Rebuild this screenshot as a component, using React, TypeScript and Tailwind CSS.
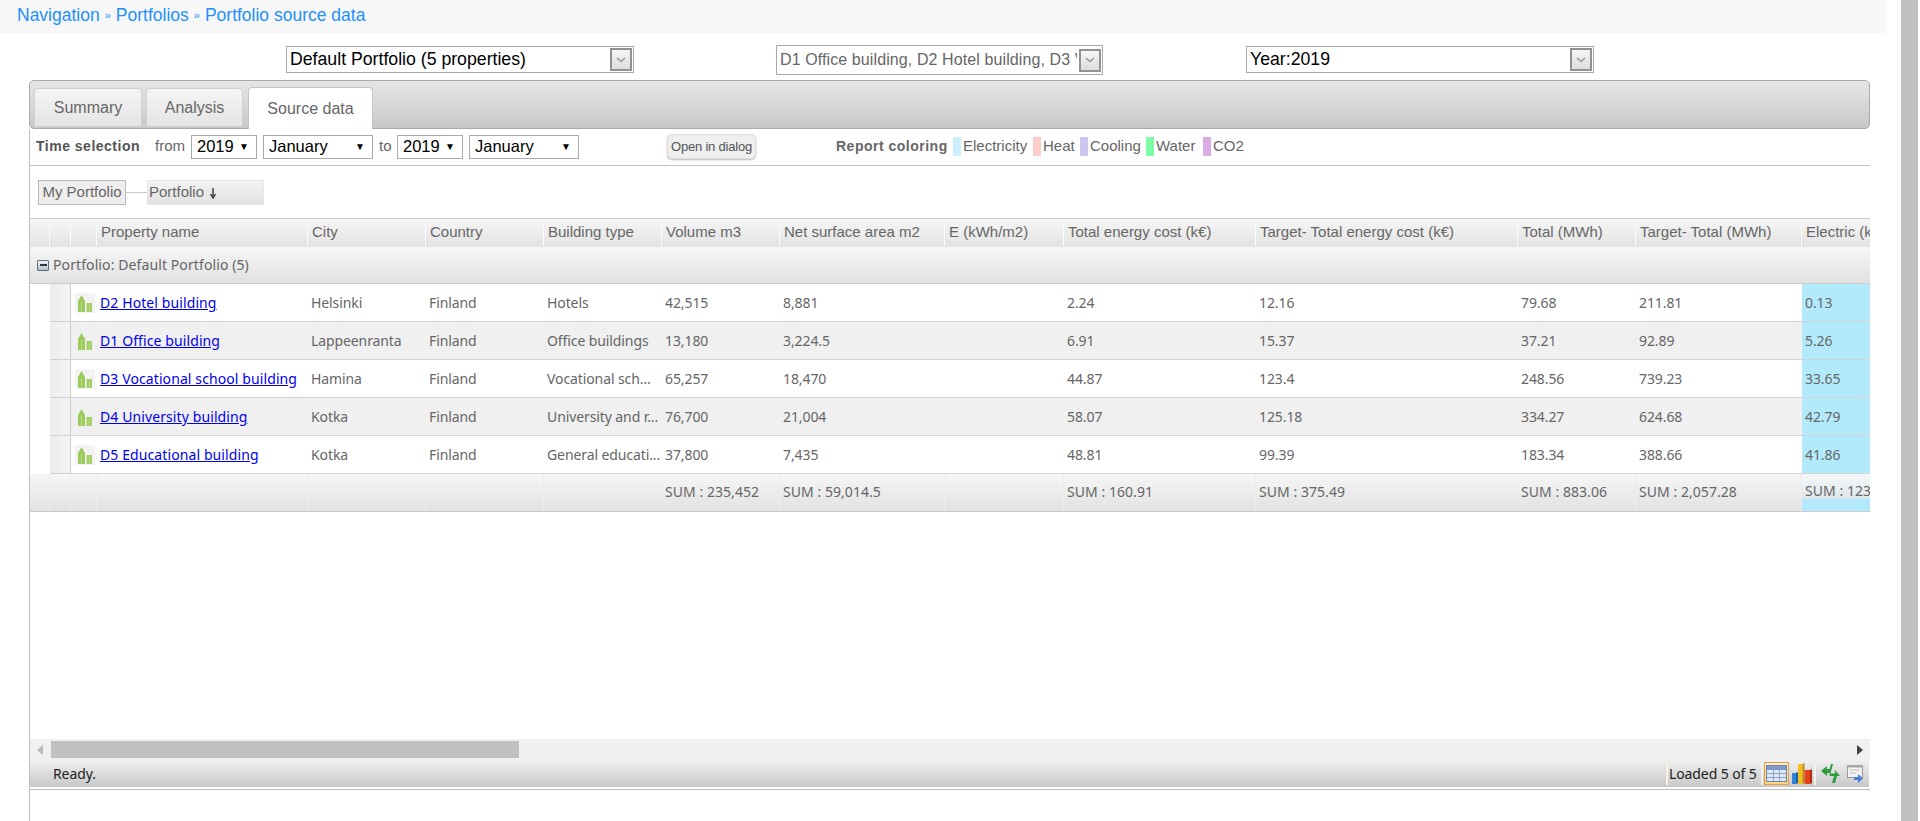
import React from "react";

const W = [
  "w-[20px]", "w-[21px]", "w-[26px]", "w-[211px]", "w-[118px]", "w-[118px]", "w-[118px]", "w-[118px]",
  "w-[165px]", "w-[119px]", "w-[192px]", "w-[262px]", "w-[118px]", "w-[166px]", "w-[120px]",
];

const HEAD = ["", "", "", "Property name", "City", "Country", "Building type", "Volume m3", "Net surface area m2", "E (kWh/m2)", "Total energy cost (k€)", "Target- Total energy cost (k€)", "Total (MWh)", "Target- Total (MWh)", "Electric (kWh)"];

const ROWS = [
  ["D2 Hotel building", "Helsinki", "Finland", "Hotels", "42,515", "8,881", "", "2.24", "12.16", "79.68", "211.81", "0.13"],
  ["D1 Office building", "Lappeenranta", "Finland", "Office buildings", "13,180", "3,224.5", "", "6.91", "15.37", "37.21", "92.89", "5.26"],
  ["D3 Vocational school building", "Hamina", "Finland", "Vocational sch...", "65,257", "18,470", "", "44.87", "123.4", "248.56", "739.23", "33.65"],
  ["D4 University building", "Kotka", "Finland", "University and r...", "76,700", "21,004", "", "58.07", "125.18", "334.27", "624.68", "42.79"],
  ["D5 Educational building", "Kotka", "Finland", "General educati...", "37,800", "7,435", "", "48.81", "99.39", "183.34", "388.66", "41.86"],
];

const SUM = ["", "", "", "", "", "", "", "SUM : 235,452", "SUM : 59,014.5", "", "SUM : 160.91", "SUM : 375.49", "SUM : 883.06", "SUM : 2,057.28", "SUM : 123.69"];

function Chevron() {
  return (
    <svg width="10" height="6" viewBox="0 0 10 6" fill="none">
      <path d="M1 1l4 3.5L9 1" stroke="#9a9a9a" strokeWidth="1.6" />
    </svg>
  );
}

function NativeSelect({ label, cls, gray }: { label: string; cls: string; gray?: boolean }) {
  return (
    <div className={`${cls} flex items-center justify-between border border-[#a9a9a9] bg-white pl-[3px] pr-[1px] whitespace-nowrap overflow-hidden`}>
      <span className={gray ? "text-[16px] tracking-[0.1px] text-[#666666] overflow-hidden" : "text-[17.7px] text-black overflow-hidden"}>{label}</span>
      <span className="ml-[2px] shrink-0 w-[22px] h-[23px] border-2 border-[#929292] bg-linear-to-b from-[#f6f6f6] to-[#dddddd] flex items-center justify-center">
        <Chevron />
      </span>
    </div>
  );
}

function MiniSelect({ label, cls }: { label: string; cls: string }) {
  return (
    <div className={`${cls} h-[24px] flex items-center justify-between border border-[#a9a9a9] bg-white pl-[5px] pr-[7px] text-[16.5px] text-black`}>
      <span>{label}</span>
      <span className="text-[10px] text-black">▼</span>
    </div>
  );
}

function Legend({ color, label, cls }: { color: string; label: string; cls: string }) {
  return (
    <>
      <span className={`${color} w-[8px] h-[19px] shrink-0`} />
      <span className={`${cls} pl-[2px] text-[15px] text-[#666666] whitespace-nowrap`}>{label}</span>
    </>
  );
}

function Building() {
  return (
    <svg width="16" height="18" viewBox="0 0 16 18">
      <path d="M1 18V7l3.5-6L8 7v11z" fill="#9ccb5c" />
      <path d="M9.5 18V9H15v9z" fill="#a4cf66" />
      <path d="M4 18V8h1v10zM12 18v-7h1v7z" fill="#bcdc8c" />
    </svg>
  );
}

function TableIcon() {
  return (
    <span className="w-[25px] h-[23px] border border-[#e0a050] bg-linear-to-b from-[#ffeec2] to-[#ffd27a] flex items-center justify-center shrink-0">
      <svg width="21" height="17" viewBox="0 0 21 17">
        <rect x="0.5" y="0.5" width="20" height="16" fill="#dfe7f5" stroke="#6d84ad" />
        <rect x="1" y="1" width="19" height="4" fill="#7e97c6" />
        <path d="M7.5 1v15M13.5 1v15M1 8.5h19M1 12.5h19" stroke="#8ea3c9" />
      </svg>
    </span>
  );
}

function ChartIcon() {
  return (
    <svg width="20" height="22" viewBox="0 0 20 22" className="ml-[3px] shrink-0">
      <path d="M0 10h4v11H0z" fill="#2f86d6" />
      <path d="M4 10l2-1v11l-2 1z" fill="#1c5fa5" />
      <path d="M6 1h4.500v20H6z" fill="#f2c01e" />
      <path d="M10.500 1l2-1v20l-2 1z" fill="#b98a0c" />
      <path d="M12.500 7H18v14h-5.500z" fill="#e8401c" />
      <path d="M18 7l2-1v14l-2 1z" fill="#a92a10" />
    </svg>
  );
}

function ArrowsIcon() {
  return (
    <svg width="19" height="19" viewBox="0 0 19 19" className="ml-[5px] shrink-0">
      <path d="M0 7l6-5v3h2.500L10 0h2L9.500 9H6v3z" fill="#2e9b3c" />
      <path d="M14 6l5 6h-3l-2 7h-3l2-7h-4l-1-2.500h6z" fill="#2e9b3c" />
    </svg>
  );
}

function SendIcon() {
  return (
    <svg width="17" height="18" viewBox="0 0 17 18" className="ml-[7px] shrink-0">
      <rect x="0.5" y="0.5" width="15" height="12" fill="#f1f1f1" stroke="#9a9a9a" />
      <rect x="0" y="0" width="16" height="2.5" fill="#a8a8a8" />
      <path d="M3 5h9M3 8h6" stroke="#c0c0c0" />
      <path d="M7 12h4V9l5 4.500L11 18v-3H7z" fill="#4a7fd6" />
    </svg>
  );
}

function Cell({ i, children, cls }: { i: number; children?: React.ReactNode; cls?: string }) {
  return <div className={`${W[i]} shrink-0 h-full flex items-center pl-[3px] whitespace-nowrap overflow-hidden ${cls ?? ""}`}>{children}</div>;
}

export default function App() {
  return (
    <div className="w-[1920px] h-[821px] overflow-hidden bg-white flex font-['Liberation_Sans',sans-serif]">
      <div className="w-[1901px] shrink-0 flex flex-col">
        {/* breadcrumb */}
        <div className="w-[1886px] h-[33px] shrink-0 bg-[#f7f7f7] pl-[17px] flex items-center text-[17.5px] text-[#1e90ff] pb-[3px] whitespace-nowrap">
          Navigation<span className="text-[11px] mx-[5px] text-[#1e90ff]">»</span>Portfolios<span className="text-[11px] mx-[5px]">»</span>Portfolio source data
        </div>

        {/* top selects */}
        <div className="h-[47px] shrink-0 flex items-start pt-[13px] pl-[286px]">
          <NativeSelect cls="w-[348px] h-[27px]" label="Default Portfolio (5 properties)" />
          <div className="ml-[142px] -mt-[1px]">
            <NativeSelect gray cls="w-[327px] h-[30px]" label="D1 Office building, D2 Hotel building, D3 Vocational school" />
          </div>
          <NativeSelect cls="ml-[143px] w-[348px] h-[27px]" label="Year:2019" />
        </div>

        {/* panel */}
        <div className="ml-[29px] w-[1841px] flex-1 flex flex-col min-h-0">
          <div className="h-[49px] shrink-0 border border-[#aaaaaa] rounded-[5px] bg-linear-to-b from-[#e6e6e6] to-[#c8c8c8] flex items-end pl-[4px] text-[16px] text-[#666666]">
            <div className="w-[108px] h-[39px] mb-[1px] pt-[1px] rounded-t-[4px] border border-[#d0d0d0] bg-linear-to-b from-[#f5f5f5] to-[#e4e4e4] flex items-center justify-center">Summary</div>
            <div className="ml-[4px] w-[97px] h-[39px] mb-[1px] pt-[1px] rounded-t-[4px] border border-[#d0d0d0] bg-linear-to-b from-[#f5f5f5] to-[#e4e4e4] flex items-center justify-center">Analysis</div>
            <div className="ml-[5px] w-[125px] h-[42px] -mb-[1px] pt-[1px] rounded-t-[4px] border border-b-0 border-[#c4c4c4] bg-white flex items-center justify-center">Source data</div>
          </div>

          <div className="flex-1 flex flex-col border-l border-[#c0c0c0] min-h-0">
            {/* time selection toolbar */}
            <div className="h-[37px] shrink-0 border-b border-[#c4c4c4] flex items-center text-[15px] text-[#666666] pb-[1px]">
              <span className="ml-[6px] w-[119px] text-[14px] font-bold tracking-[0.5px] text-[#555555] whitespace-nowrap">Time selection</span>
              <span className="w-[36px]">from</span>
              <MiniSelect cls="w-[66px]" label="2019" />
              <MiniSelect cls="ml-[6px] w-[110px]" label="January" />
              <span className="ml-[6px] w-[18px]">to</span>
              <MiniSelect cls="w-[66px]" label="2019" />
              <MiniSelect cls="ml-[6px] w-[110px]" label="January" />
              <div className="ml-[88px] w-[89px] h-[25px] rounded-[5px] bg-[#efefef] border border-[#dddddd] shadow-[0_1px_2px_#bbbbbb] flex items-center justify-center text-[13px] tracking-[-0.2px] text-[#555555] whitespace-nowrap">Open in dialog</div>
              <span className="ml-[80px] w-[117px] text-[14px] font-bold tracking-[0.5px] text-[#666666] whitespace-nowrap">Report coloring</span>
              <Legend color="bg-[#cceeff]" label="Electricity" cls="w-[72px]" />
              <Legend color="bg-[#ffcccc]" label="Heat" cls="w-[39px]" />
              <Legend color="bg-[#ccc6ee]" label="Cooling" cls="w-[58px]" />
              <Legend color="bg-[#7dfba6]" label="Water" cls="w-[49px]" />
              <Legend color="bg-[#d9ade3]" label="CO2" cls="w-[40px]" />
            </div>

            {/* grouping */}
            <div className="h-[52px] shrink-0 pt-[14px] pl-[8px] flex items-start">
              <div className="w-[88px] h-[25px] border border-[#bbbbbb] bg-[#eeeeee] flex items-center justify-center text-[15px] text-[#666666] whitespace-nowrap">My Portfolio</div>
              <div className="w-[21px] h-[1px] bg-[#cccccc] mt-[12px]" />
              <div className="w-[117px] h-[25px] border border-[#e6e6e6] bg-linear-to-b from-[#f3f3f3] to-[#e2e2e2] flex items-start pl-[1px] text-[15px] text-[#666666]">
                Portfolio
                <svg width="10" height="12" viewBox="0 0 10 12" className="ml-[4px] mt-[6px]">
                  <path d="M5 1v8M2.500 7L5 11l2.500-4" stroke="#333333" strokeWidth="1.4" fill="none" />
                </svg>
              </div>
            </div>

            {/* grid */}
            <div className="shrink-0 w-[1840px] overflow-hidden border-t border-[#cccccc] text-[#666666]">
              <div className="h-[27px] flex bg-linear-to-b from-[#f6f6f6] to-[#e3e3e3] text-[15px]">
                {HEAD.map((h, i) => (
                  <Cell key={i} i={i} cls="border-r border-[#fafafa] pl-[4px]">{h}</Cell>
                ))}
              </div>

              <div className="h-[38px] border-t border-[#e6e6e6] border-b border-b-[#cccccc] flex items-center bg-linear-to-b from-[#f6f6f6] to-[#e1e1e1] pl-[7px] pb-[2px] text-[14px] font-['Noto_Sans',sans-serif] tracking-[0.1px]">
                <span className="w-[12px] h-[11px] mt-[2px] rounded-[1px] border border-[#5d6d7d] bg-linear-to-b from-[#f0f4f8] to-[#b4c0cc] flex items-center justify-center shrink-0">
                  <span className="w-[7px] h-[2px] bg-[#333333]" />
                </span>
                <span className="ml-[4px]">Portfolio: Default Portfolio (5)</span>
              </div>

              {ROWS.map((r, ri) => (
                <div key={ri} className="h-[38px] flex font-['Noto_Sans',sans-serif] text-[14px] tracking-[-0.1px]">
                  <Cell i={0} />
                  <Cell i={1} cls="border-b border-[#d0d0d0] bg-linear-to-r from-[#ececec] to-[#f4f4f4] border-r border-r-[#cccccc]" />
                  <div className={`flex flex-1 border-b border-[#d4d4d4] ${ri % 2 ? "bg-[#f0f0f0]" : "bg-white"}`}>
                    <Cell i={2} cls="pl-[4px]">
                      <span className={`w-[20px] h-[20px] flex items-center justify-center ${ri % 2 ? "" : "bg-[#f3f3f3]"}`}>
                        <Building />
                      </span>
                    </Cell>
                    <Cell i={3}>
                      <a className="text-[#0000ee] underline tracking-[0.1px]">{r[0]}</a>
                    </Cell>
                    {r.slice(1, 11).map((v, ci) => (
                      <Cell key={ci} i={ci + 4}>{v}</Cell>
                    ))}
                    <Cell i={14} cls="bg-[#b3eafb]">{r[11]}</Cell>
                  </div>
                </div>
              ))}

              <div className="h-[38px] flex font-['Noto_Sans',sans-serif] text-[14px] tracking-[0.05px] border-b border-[#cccccc] bg-linear-to-b from-[#f6f6f6] to-[#e2e2e2]">
                {SUM.map((s, i) =>
                  i === 14 ? (
                    <div key={i} className={`${W[i]} shrink-0 h-full flex flex-col bg-[#b3eafb]`}>
                      <div className="h-[25px] pl-[3px] bg-linear-to-b from-[#f4f8f9] to-[#dfe6e8] flex items-center whitespace-nowrap pt-[8px]">{s}</div>
                    </div>
                  ) : (
                    <Cell key={i} i={i} cls="border-r border-[#ededed] pb-[3px]">{s}</Cell>
                  )
                )}
              </div>
            </div>

            <div className="flex-1 min-h-0" />

            {/* horizontal scrollbar */}
            <div className="h-[21px] shrink-0 bg-[#f0f0f0] flex items-center justify-between pl-[7px] pr-[7px]">
              <div className="flex items-center">
                <span className="w-0 h-0 border-y-[5px] border-y-transparent border-r-[6px] border-r-[#bbbbbb]" />
                <span className="ml-[8px] w-[468px] h-[17px] bg-[#c0c0c0]" />
              </div>
              <span className="w-0 h-0 border-y-[5px] border-y-transparent border-l-[6px] border-l-[#444444]" />
            </div>

            {/* status bar */}
            <div className="h-[27px] shrink-0 w-[1839px] bg-linear-to-b from-[#f0f0f0] via-[#dcdcdc] to-[#c8c8c8] flex items-center pl-[23px] font-['Noto_Sans',sans-serif] text-[14px] text-[#222222] tracking-[-0.1px]">
              <span>Ready.</span>
              <div className="ml-auto flex items-center h-full pr-[5px]">
                <span className="w-[2px] h-[22px] bg-[#f4f1e6]" />
                <span className="ml-[1px] w-[92px] whitespace-nowrap">Loaded 5 of 5</span>
                <span className="w-[2px] h-[22px] bg-[#f4f1e6]" />
                <span className="ml-[1px]"><TableIcon /></span>
                <ChartIcon />
                <span className="ml-[2px] w-[2px] h-[22px] bg-[#f4f1e6]" />
                <ArrowsIcon />
                <SendIcon />
              </div>
            </div>
            <div className="h-[2px] shrink-0 bg-white" />
            <div className="h-[1px] shrink-0 bg-[#bbbbbb]" />
            <div className="h-[31px] shrink-0" />
          </div>
        </div>
      </div>
      <div className="w-[17px] h-full bg-[#c0c0c0] shrink-0" />
      <div className="w-[2px] h-full bg-white shrink-0" />
    </div>
  );
}
